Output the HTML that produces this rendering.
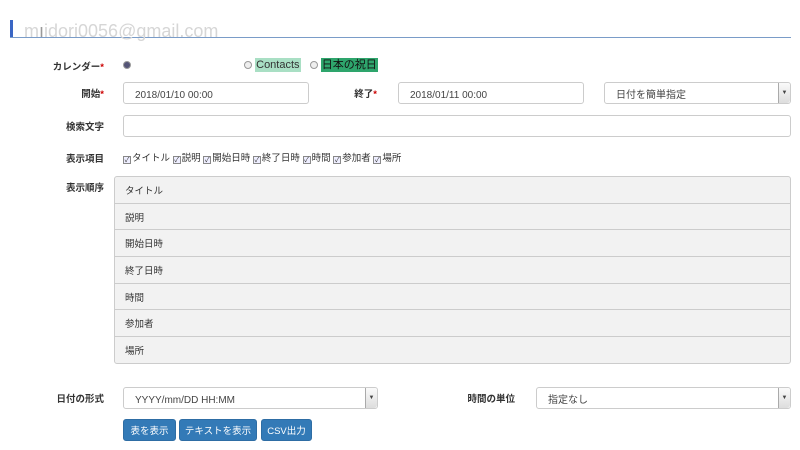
<!DOCTYPE html>
<html><head><meta charset="utf-8"><style>
*{box-sizing:border-box;margin:0;padding:0}
body{width:800px;height:450px;background:#fff;font-family:"Liberation Sans","Noto Sans CJK JP",sans-serif;font-size:10px;color:#333;position:relative;overflow:hidden}
.a{position:absolute}
.lbl{position:absolute;font-weight:bold;font-size:9.5px;text-align:right;color:#333;line-height:12px}
.req{color:#c00}
.inp{position:absolute;border:1px solid #ccc;border-radius:3px;background:#fff;font-size:10px;padding-left:11px;padding-top:7px;color:#444;line-height:12px}
.arr{position:absolute;right:0;top:0;width:12px;height:100%;border-left:1px solid #aaa;background:linear-gradient(#fafafa,#ddd);font-size:6px;display:flex;align-items:center;justify-content:center;border-radius:0 3px 3px 0;padding:0}
.row{height:26.7px;border-bottom:1px solid #ccc;padding-left:10px;padding-top:9px;font-size:9.5px;color:#333;line-height:12px}
.btn{position:absolute;top:419px;height:22px;background:#337ab7;color:#fff;font-size:9.5px;text-align:center;padding-top:6px;border-radius:3px;border:1px solid #2e6da4;line-height:12px}
.cb{display:inline-block;width:8px;height:8px;border:1px solid #888;font-size:7px;line-height:7px;text-align:center;margin:0 1px 0 0;vertical-align:-1px;background:#eef}
.rad{display:inline-block;width:8px;height:8px;border:1px solid #999;border-radius:50%;vertical-align:-1px;background:#eee}
</style></head><body>
<div class="a" style="left:10px;top:20px;width:3px;height:18px;background:#3a66c4"></div>
<div class="a" style="left:10px;top:37px;width:781px;height:1px;background:#7a9cc8"></div>
<div class="a" style="left:24px;top:20px;font-size:18px;color:#d6d6d6;line-height:22px">m<span style="color:#999">ı</span>idori0056@gmail.com</div>

<div class="lbl" style="left:40px;width:64px;top:62px">カレンダー<span class="req">*</span></div>
<div class="a" style="left:123px;top:58px;font-size:11px;white-space:nowrap;line-height:14px">
<span class="rad" style="background:#557"></span><span style="display:inline-block;width:110px;color:#dde8f0">&nbsp;</span>
<span class="rad"></span> <span style="background:#a9dfc4;padding:1px 1px">Contacts</span>
&nbsp;&nbsp;<span class="rad"></span> <span style="background:#2ea56c;padding:1px 1px;color:#111">日本の祝日</span></div>

<div class="lbl" style="left:40px;width:64px;top:89px">開始<span class="req">*</span></div>
<div class="inp" style="left:123px;top:82px;width:186px;height:22px">2018/01/10 00:00</div>
<div class="lbl" style="left:330px;width:47px;top:89px">終了<span class="req">*</span></div>
<div class="inp" style="left:398px;top:82px;width:186px;height:22px">2018/01/11 00:00</div>
<div class="inp" style="left:604px;top:82px;width:187px;height:22px">日付を簡単指定<div class="arr">▼</div></div>

<div class="lbl" style="left:40px;width:64px;top:122px">検索文字</div>
<div class="inp" style="left:123px;top:115px;width:668px;height:22px"></div>

<div class="lbl" style="left:40px;width:64px;top:154px">表示項目</div>
<div class="a" style="left:123px;top:153px;font-size:9.5px;white-space:nowrap;line-height:12px"><span class="cb">✓</span>タイトル <span class="cb">✓</span>説明 <span class="cb">✓</span>開始日時 <span class="cb">✓</span>終了日時 <span class="cb">✓</span>時間 <span class="cb">✓</span>参加者 <span class="cb">✓</span>場所</div>

<div class="lbl" style="left:40px;width:64px;top:183px">表示順序</div>
<div class="a" style="left:114px;top:176px;width:677px;height:188px;border:1px solid #ccc;border-radius:3px;background:#f2f2f2;overflow:hidden">
<div class="row">タイトル</div><div class="row">説明</div><div class="row">開始日時</div><div class="row">終了日時</div><div class="row">時間</div><div class="row">参加者</div><div class="row" style="border:0">場所</div>
</div>

<div class="lbl" style="left:40px;width:64px;top:394px">日付の形式</div>
<div class="inp" style="left:123px;top:387px;width:255px;height:22px">YYYY/mm/DD HH:MM<div class="arr">▼</div></div>
<div class="lbl" style="left:440px;width:75px;top:394px">時間の単位</div>
<div class="inp" style="left:536px;top:387px;width:255px;height:22px">指定なし<div class="arr">▼</div></div>

<div class="btn" style="left:123px;width:53px">表を表示</div>
<div class="btn" style="left:179px;width:78px">テキストを表示</div>
<div class="btn" style="left:261px;width:51px">CSV出力</div>
</body></html>
